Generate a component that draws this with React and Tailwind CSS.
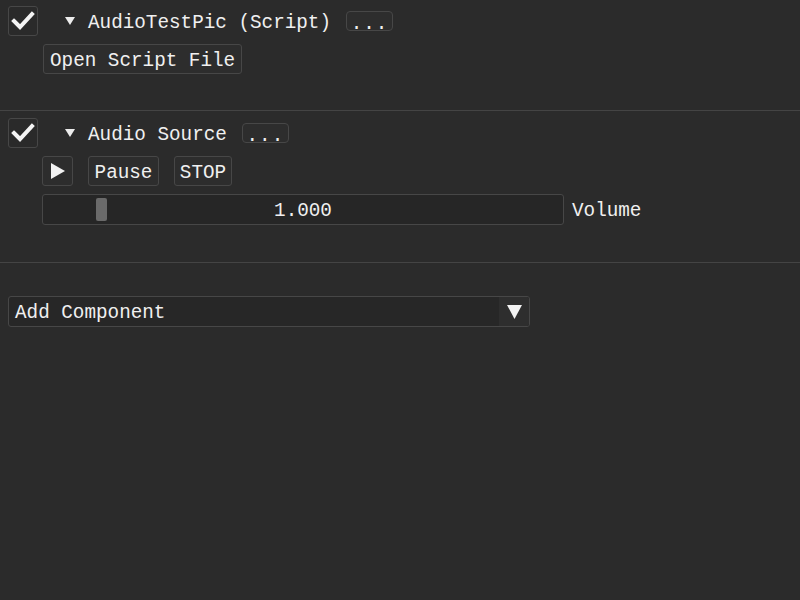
const font = { fontFamily: '"Liberation Mono", "DejaVu Sans Mono", monospace' };

function Check() {
  return (
    <div className="w-[30px] h-[30px] border border-[#474747] rounded-[3px] bg-[#2a2a2a] flex items-center justify-center">
      <svg width="24" height="20" viewBox="0 0 24 20">
        <polyline points="3,10 9,16 21,3" fill="none" stroke="#f4f4f4" strokeWidth="4" strokeLinecap="square" />
      </svg>
    </div>
  );
}

function Tri() {
  return (
    <svg width="10" height="8" viewBox="0 0 10 8" className="shrink-0">
      <polygon points="0,0 10,0 5,8" fill="#ececec" />
    </svg>
  );
}

function Btn({ children, className = "" }) {
  return (
    <div className={"border border-[#474747] rounded-[3px] bg-[#2d2d2d] flex items-center justify-center leading-none " + className}>
      {children}
    </div>
  );
}

function Dots({ className = "" }) {
  return (
    <div className={"w-[47px] h-[20px] border border-[#474747] rounded-[4px] bg-[#2d2d2d] flex justify-center items-center " + className}>
      <span className="leading-none relative top-[4px] tracking-[1px]">...</span>
    </div>
  );
}

export default function App() {
  return (
    <div className="w-[800px] h-[600px] bg-[#2b2b2b] text-[#f0f0f0] text-[19.3px] flex flex-col overflow-hidden" style={font}>
      {/* Script component */}
      <div className="flex items-center h-[30px] mt-[6px] pl-[8px]">
        <Check />
        <div className="ml-[27px]"><Tri /></div>
        <span className="ml-[13px] leading-none pt-[5px]">AudioTestPic (Script)</span>
        <Dots className="ml-[15px]" />
      </div>
      <div className="flex mt-[8px] pl-[43px]">
        <Btn className="h-[30px] px-[6px] pt-[5px]">Open Script File</Btn>
      </div>
      <div className="mt-[36px] h-px bg-[#444444]" />

      {/* Audio Source */}
      <div className="flex items-center h-[30px] mt-[7px] pl-[8px]">
        <Check />
        <div className="ml-[27px]"><Tri /></div>
        <span className="ml-[13px] leading-none pt-[5px]">Audio Source</span>
        <Dots className="ml-[15px]" />
      </div>
      <div className="flex items-center gap-[15px] mt-[8px] pl-[42px]">
        <Btn className="w-[31px] h-[30px]">
          <svg width="14" height="16" viewBox="0 0 14 16">
            <polygon points="0,0 14,8 0,16" fill="#f2f2f2" />
          </svg>
        </Btn>
        <Btn className="h-[30px] w-[71px] pt-[5px]">Pause</Btn>
        <Btn className="h-[30px] w-[58px] pt-[5px]">STOP</Btn>
      </div>
      <div className="flex items-center mt-[8px] pl-[42px]">
        <div className="relative w-[522px] h-[31px] border border-[#474747] rounded-[3px] bg-[#262626] flex items-center justify-center leading-none pt-[5px]">
          <div className="absolute left-[53px] top-[3px] w-[11px] h-[23px] bg-[#6a6a6a] rounded-[2px]" />
          <span>1.000</span>
        </div>
        <span className="ml-[8px] leading-none pt-[5px]">Volume</span>
      </div>
      <div className="mt-[37px] h-px bg-[#444444]" />

      {/* Add Component */}
      <div className="flex mt-[33px] pl-[8px]">
        <div className="w-[522px] h-[31px] border border-[#474747] rounded-[3px] bg-[#272727] flex items-center overflow-hidden">
          <span className="flex-1 pl-[6px] leading-none pt-[4px]">Add Component</span>
          <div className="w-[30px] h-full bg-[#2e2e2e] flex items-center justify-center">
            <svg width="15" height="14" viewBox="0 0 15 14">
              <polygon points="0,0 15,0 7.5,14" fill="#f2f2f2" />
            </svg>
          </div>
        </div>
      </div>
    </div>
  );
}
